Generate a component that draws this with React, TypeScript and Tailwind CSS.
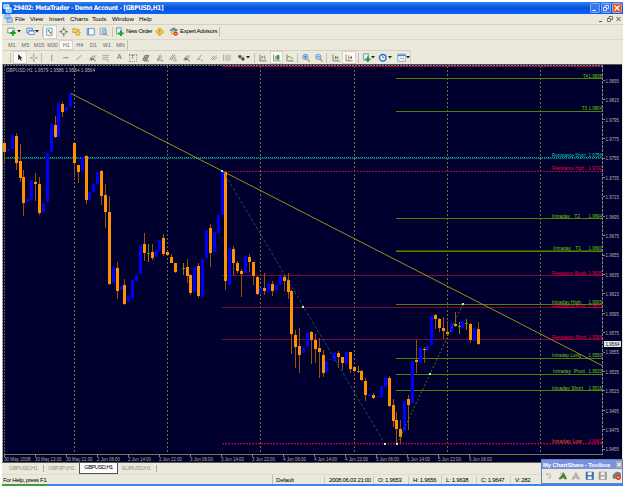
import React from 'react';
import clsx from 'clsx';

type Kind = 'up' | 'down' | 'doji';
// kind, body top, body bottom, wick top, wick bottom
type Candle = [Kind, number, number, number?, number?];

const U: Kind = 'up';
const D: Kind = 'down';
const N: Kind = 'doji';

const CANDLES: Candle[] = [
  [D, 143, 152, 143, 164], [U, 149, 151], [U, 135, 149], [D, 136, 163, 133, 170], [D, 161, 178, 144, 182],
  [D, 177, 203, 170, 216], [U, 199, 202], [U, 180, 200], [D, 182, 184, 173, 201], [D, 184, 213, 177, 215],
  [U, 203, 212], [U, 153, 202], [U, 124, 152], [D, 125, 137, 116, 138], [U, 103, 137],
  [D, 104, 112, 102, 117], [U, 107, 111], [U, 93, 107], [D, 143, 163, 142, 177], [D, 165, 172, 165, 183],
  [U, 157, 171], [D, 156, 200, 155, 204], [U, 192, 200], [U, 184, 192], [U, 172, 184],
  [D, 171, 196, 170, 205], [D, 195, 212, 184, 228], [D, 212, 284, 196, 285], [U, 267, 283], [D, 268, 291, 262, 299],
  [U, 286, 290], [D, 285, 304, 279, 305], [U, 296, 302], [U, 280, 298], [U, 275, 281],
  [U, 245, 274], [D, 244, 253, 233, 261], [N, 253, 254, 244, 262], [D, 252, 258, 244, 260], [U, 250, 257],
  [U, 240, 251], [D, 238, 254, 234, 256], [D, 252, 255, 251, 256], [D, 257, 263, 254, 263], [D, 263, 272, 263, 273],
  [U, 270, 271], [N, 268, 269, 263, 275], [D, 267, 276, 259, 283], [D, 275, 293, 274, 295], [U, 267, 292],
  [D, 266, 296, 263, 298], [U, 259, 297], [U, 230, 258], [D, 228, 253, 224, 267], [U, 232, 252],
  [U, 215, 233], [U, 171, 215], [D, 172, 281, 171, 290], [U, 248, 285], [D, 249, 263, 246, 275],
  [D, 263, 271, 261, 273], [D, 271, 274, 269, 297], [U, 256, 273], [D, 257, 262, 254, 272], [D, 262, 276, 262, 285],
  [D, 277, 294, 276, 295], [U, 288, 293], [D, 288, 291, 273, 295], [U, 283, 292], [D, 284, 291, 281, 296],
  [U, 285, 290], [U, 276, 285], [D, 277, 281, 274, 291], [D, 280, 292, 273, 299], [D, 291, 334, 290, 354],
  [D, 335, 347, 330, 368], [D, 346, 355, 328, 373], [U, 348, 353], [U, 333, 347], [D, 332, 340, 331, 364],
  [D, 340, 349, 334, 363], [D, 348, 352, 338, 378], [D, 355, 373, 350, 377], [U, 361, 372], [U, 359, 360],
  [U, 352, 361], [D, 353, 357, 351, 368], [D, 357, 363, 357, 370], [U, 352, 364], [D, 352, 369, 352, 373],
  [D, 367, 371, 366, 372], [N, 371, 372, 366, 373], [D, 371, 380, 370, 381], [D, 381, 395, 378, 401], [U, 394, 396],
  [D, 395, 398, 393, 399], [U, 396, 397], [U, 386, 397], [U, 377, 387], [D, 378, 406, 376, 407],
  [D, 405, 421, 399, 427], [D, 420, 429, 412, 445], [D, 429, 437, 420, 444], [U, 401, 431], [D, 399, 405, 395, 430],
  [U, 361, 403], [D, 360, 362, 340, 373], [U, 348, 363], [D, 349, 350, 347, 363], [U, 346, 350],
  [U, 316, 345], [D, 315, 319, 314, 329], [D, 319, 328, 318, 332], [D, 328, 331, 317, 339], [D, 332, 334, 321, 335],
  [U, 323, 332], [D, 324, 326, 312, 327], [N, 326, 327, 322, 334], [U, 321, 328], [N, 323, 324, 319, 330],
  [D, 324, 340, 323, 343], [U, 328, 341], [D, 329, 344, 322, 345],
];

const TIMES: [number, string][] = [
  [4, '30 May 2008'], [35, '30 May 13:00'], [66, '30 May 21:00'], [97, '2 Jun 06:00'],
  [128, '2 Jun 14:00'], [159, '2 Jun 22:00'], [190, '3 Jun 06:00'], [221, '3 Jun 14:00'],
  [252, '3 Jun 22:00'], [283, '4 Jun 06:00'], [314, '4 Jun 14:00'], [345, '4 Jun 22:00'],
  [376, '5 Jun 06:00'], [407, '5 Jun 14:00'], [438, '5 Jun 22:00'], [469, '6 Jun 06:00'],
];

const GREEN = '#74c800';
const RED = '#f00046';

// label x, baseline y, width, name, price, colour
const LEVELS: [number, number, number, string, string, string][] = [
  [583, 77.7, 5, 'T4', '1.9838', GREEN],
  [582, 110, 5, 'T3', '1.9804', GREEN],
  [552, 157, 34, 'Resistance Short', '1.9756', '#00d0b8'],
  [552, 170.3, 32, 'Resistance High', '1.9742', RED],
  [552, 217.7, 28, 'Intraday   T2', '1.9694', GREEN],
  [553, 250, 28, 'Intraday   T1', '1.9660', GREEN],
  [552, 274.7, 34, 'Resistance Break', '1.9635', RED],
  [552, 308, 33, 'Resistance Pivot', '1.9602', RED],
  [552, 303.5, 29, 'Intraday High', '1.9605', GREEN],
  [552, 338.7, 34, 'Resistance Short', '1.9568', RED],
  [552, 357.2, 29, 'Intraday Long', '1.9550', GREEN],
  [553, 373.2, 32, 'Intraday  Pivot', '1.9533', GREEN],
  [552, 389.7, 31, 'Intraday Short', '1.9516', GREEN],
];

function Chart() {
  return (
    <svg
      width="620"
      height="399"
      viewBox="2 64 620 399"
      className="block shrink-0 bg-[#00002e]"
      fontFamily="'Liberation Sans', sans-serif"
      fontSize="5.5"
    >
      <g shapeRendering="crispEdges">
        <path d="M2 64.5H622" stroke="#55554c" />
        <path d="M2.5 64V463" stroke="#a8a498" />
        <path d="M4 65.5H602" stroke="#77777a" strokeDasharray="2 1" />
        <path d="M4.5 66V454" stroke="#606058" strokeDasharray="2 1" />
        {[74.5, 167.5, 260.5, 354.5, 447.5, 540.5].map((x) => (
          <path key={x} d={`M${x} 66V454`} stroke="#70702f" strokeDasharray="2 2" />
        ))}
        <path d="M4 157.5H602" stroke="#00a890" strokeDasharray="1 1" />
        <path d="M4 158.5H602" stroke="#007068" strokeDasharray="2 1" />
        <path d="M222 66.5H602" stroke="#a80838" />
        <path d="M222 171.5H602" stroke="#b0003c" strokeDasharray="2 1" />
        {[275.5, 307.5, 339.5].map((y) => (
          <path key={y} d={`M222 ${y}H602`} stroke="#900038" />
        ))}
        <path d="M222 443.5H602" stroke="#b80038" strokeDasharray="2 1" />
        <path d="M223 444.5H602" stroke="#780038" strokeDasharray="1 2" />
        {[78.5, 111.5, 218.5, 251.5, 304.5, 358.5, 374.5, 390.5].map((y) => (
          <path key={y} d={`M396 ${y}H602`} stroke="#4a8400" />
        ))}
        <path d="M396 250.5H602" stroke="#2c5400" />
      </g>

      <g shapeRendering="crispEdges">
        {CANDLES.map(([kind, top, bottom, high, low], i) => {
          const x = Math.floor(4.5 + i * 3.885);
          const fill = kind === 'up' ? '#0000ff' : kind === 'down' ? '#ff9000' : '#858500';
          return (
            <g key={i}>
              {high !== undefined && low !== undefined && (
                <rect x={x} y={high} width="1" height={low - high} fill={kind === 'doji' ? '#858500' : '#985600'} />
              )}
              <rect x={x - 1} y={top} width="3" height={Math.max(1, bottom - top)} fill={fill} />
            </g>
          );
        })}
      </g>

      <path d="M71 93.5L602 365.5" stroke="#aaa000" strokeWidth="0.9" />
      <path d="M223 171L385 444" stroke="#107070" strokeWidth="0.8" strokeDasharray="3 2" />
      <path d="M397 444L463 304" stroke="#4d9800" strokeWidth="0.8" strokeDasharray="2 2" />
      {[[222, 171], [303, 307], [385, 444], [397, 444], [430, 374], [463, 304]].map(([x, y]) => (
        <rect key={x} x={x - 1} y={y - 1} width="2" height="2" fill="#b9ff8c" />
      ))}

      <text x="6" y="71.5" textLength="89" lengthAdjust="spacingAndGlyphs" fill="#b8b898">
        GBPUSD,H1  1.9579 1.9586 1.9564 1.9564
      </text>
      {LEVELS.map(([x, y, width, name, price, color]) => (
        <g key={`${name}${y}`} fill={color}>
          <text x={x} y={y} className="whitespace-pre" textLength={width} lengthAdjust="spacingAndGlyphs">{name}</text>
          <text x="588.5" y={y} textLength="13.5" lengthAdjust="spacingAndGlyphs">{price}</text>
        </g>
      ))}
      <text x="552" y="443" fill="#e05a10" textLength="30" lengthAdjust="spacingAndGlyphs">Intraday Low</text>
      <text x="588.5" y="443" fill={RED} textLength="13.5" lengthAdjust="spacingAndGlyphs">1.9461</text>

      <g shapeRendering="crispEdges" stroke="#858575">
        <path d="M602.5 65V455" strokeDasharray="3 1" />
        <path d="M4 454.5H603" stroke="#77783b" />
        {Array.from({ length: 20 }, (_, i) => (
          <path key={i} d={`M603 ${Math.round(80 + i * 19.4) + 0.5}H605`} />
        ))}
        {TIMES.map(([x]) => (
          <path key={x} d={`M${x + 0.5} 454V457`} />
        ))}
        <path d="M2 462.5H622" stroke="#5c5b55" />
      </g>
      {Array.from({ length: 20 }, (_, i) => (
        <text key={i} x="605.5" y={82.7 + i * 19.4} textLength="13.5" lengthAdjust="spacingAndGlyphs" fill="#b4b3aa">
          {(1.9835 - i * 0.002).toFixed(4)}
        </text>
      ))}
      <rect x="604" y="341" width="17" height="6" fill="#e6e6e0" />
      <text x="605.5" y="346" textLength="14" lengthAdjust="spacingAndGlyphs" fill="#111">1.9564</text>
      {TIMES.map(([x, label]) => (
        <text key={label} x={x} y="460.7" textLength={label.includes('May') ? 26.5 : 23} lengthAdjust="spacingAndGlyphs" fill="#b4b398">
          {label}
        </text>
      ))}
    </svg>
  );
}

const GLYPHS: Record<string, React.ReactNode> = {
  cursor: <path d="M4 1.5V9L6 7l1.5 3 1-.5L7 6.7h2.5z" fill="#222" />,
  cross: <path d="M6 1v4M6 7v4M1 6h4M7 6h4" stroke="#777" />,
  target: <><circle cx="6" cy="6" r="3" fill="none" stroke="#777" /><path d="M6 0v4M6 8v4M0 6h4M8 6h4" stroke="#555" /></>,
  vline: <path d="M6 2v8" stroke="#777" />,
  hline: <path d="M2.5 6h7" stroke="#777" />,
  trend: <path d="M3 9l6-6" stroke="#777" />,
  channel: <path d="M2 9l5-6M4 10l6-7M3 6l6 3M3 8h4M8 10h2" stroke="#666" fill="none" />,
  fibo: <path d="M2 3h8M2 5.5h8M2 8h6M9 8v3" stroke="#777" strokeDasharray="1.5 .6" />,
  fork: <path d="M2 9l3-6h5L7 9zM4 6h5M4 10h6" stroke="#666" fill="#aaa" />,
  fan: <path d="M3 9l4-7M3 9l6-5M3 9h5M9 8v3" stroke="#777" fill="none" />,
  lines: <path d="M1.5 9l5-7M4 9l5-7M6.5 10l3-5M10 8v3" stroke="#777" fill="none" />,
  angle: <path d="M3 8l6-6M3 8h4M9 8v3" stroke="#888" fill="none" />,
  slashes: <path d="M2 8l4-4M4 9l5-6M7 9l3-4" stroke="#888" />,
  zones: <path d="M2 2v8M5 2v8M7.5 2v8M10 2v8" stroke="#999" />,
  arrows: <path d="M2 3h3v3H2zM6 6h3v3H6zM4 8l4-5" fill="#444" stroke="#333" strokeWidth=".5" />,
  bars: <><path d="M2.5 2v8H11" stroke="#666" fill="none" /><path d="M5 4v4M5 5h2M8.5 3v5" stroke="#489048" /></>,
  candles: <><path d="M2 2v8h9M4.5 4v4" stroke="#666" fill="none" /><path d="M6 3h3v5H6z" fill="#20a838" stroke="#167022" strokeWidth=".5" /></>,
  curve: <><path d="M2.5 2v8H11" stroke="#666" fill="none" /><path d="M3 6c3-4 4 1 7 1" stroke="#35933b" fill="none" /></>,
  zoomin: <><path d="M8 8l3 3" stroke="#c9a52c" strokeWidth="1.8" /><circle cx="5.5" cy="5" r="3.4" fill="#c4e1ff" stroke="#5584c4" /><path d="M3.5 5h4M5.5 3v4" stroke="#2560b4" /></>,
  zoomout: <><path d="M8 8l3 3" stroke="#c9a52c" strokeWidth="1.8" /><circle cx="5.5" cy="5" r="3.4" fill="#c4e1ff" stroke="#5584c4" /><path d="M3.5 5h4" stroke="#2560b4" /></>,
  scroll: <><path d="M2.5 2v8H11M8.5 4v4" stroke="#666" fill="none" /><path d="M5 3.5L8 6 5 8z" fill="#2e9b38" /></>,
  shift: <><path d="M2.5 2v8H11M6 3v6" stroke="#666" fill="none" /><path d="M10 3.5L7 6l3 2z" fill="#b95525" /></>,
  newchart: <><path d="M1 1.5h8v6H1z" fill="#fff" stroke="#63845d" /><path d="M7.5 4v7M4 7.5h7" stroke="#14a51e" strokeWidth="2.5" /></>,
  profiles: <><path d="M1 1.5h7v6H1z" fill="#cfe1f8" stroke="#507cb4" /><path d="M3.5 4.5h7v5h-7z" fill="#f1f7ff" stroke="#507cb4" /><path d="M4 5h6" stroke="#4d83d1" strokeWidth="1.3" /></>,
  market: <><path d="M2 1.5h7v9H2z" fill="#fff" stroke="#5386c4" /><path d="M3.5 3.5H6v2.2H3.5z" fill="#24a84a" /><path d="M5.5 6H8v2.2H5.5z" fill="#d65330" /></>,
  folder: <><path d="M1 2h4l1 1h3v4H1z" fill="#f5cf54" stroke="#ab8426" strokeWidth=".7" /><path d="M7 4.5l1.3 2 2.7.3-2 1.7.5 2.5L7 9.8 5 11l.5-2.5-1.8-1.7 2.5-.3z" fill="#ffd943" stroke="#af8525" strokeWidth=".6" /></>,
  terminal: <><path d="M1.5 2h9v8h-9z" fill="#fff" stroke="#477dbb" /><path d="M3 2v8" stroke="#5d9be4" strokeWidth="2" /></>,
  tester: <><path d="M1.5 1.5h7v8h-7z" fill="#e4edfb" stroke="#6b96cc" /><circle cx="6.5" cy="6" r="2.5" fill="#bdd5f3" stroke="#547caf" /><path d="M8 8l3 3" stroke="#c69c29" strokeWidth="1.4" /></>,
  order: <><path d="M2 1h6v8H2z" fill="#e5effc" stroke="#6780a4" /><path d="M7.5 4.5v7M4 8h7" stroke="#17a524" strokeWidth="2.4" /></>,
  diamond: <><path d="M6 1l5 5-5 5-5-5z" fill="#ffcf36" stroke="#c38a12" /><path d="M6 3.5v3.5M6 8v1" stroke="#835e0b" /></>,
  advisor: <><path d="M1 4l5-3 5 3-5 2z" fill="#4d91db" stroke="#2e66a1" strokeWidth=".6" /><circle cx="5" cy="7" r="3" fill="#f0bb4e" /><circle cx="8.5" cy="8.5" r="2.7" fill="#d83a21" /><path d="M7.3 8.5h2.4" stroke="#fff" /></>,
  clock: <><circle cx="6" cy="6" r="4.2" fill="#e9f5ff" stroke="#2e70cf" strokeWidth="1.8" /><path d="M6 3.5V6h2" stroke="#355d97" fill="none" /></>,
  template: <><path d="M1 1.5h10v9H1z" fill="#f6faff" stroke="#6f98c9" /><path d="M1 3h10" stroke="#5189d1" strokeWidth="2" /><path d="M3 8l2-2 2 2 2-2" stroke="#b36c50" fill="none" /></>,
  undo: <path d="M3 4h5v5H5M5 2L3 4l2 2" stroke="#aaa" fill="none" />,
  share: <><path d="M1 10l4-5 2-3 4 8H8L6.500 7.500 4 10z" fill="#269435" stroke="#5c6a2c" strokeWidth=".7" /><path d="M3 4l2-2" stroke="#c5482c" /></>,
  sharegray: <path d="M1 10l3-4 2-4 2 3 3 5H8L6 7l-2 3z" fill="#bbb" stroke="#999" strokeWidth=".8" />,
  disk: <><path d="M1.5 1.5h9v9h-9z" fill="#3a7ac4" stroke="#27599a" /><path d="M3.5 1.5h5V5h-5zM3.5 7h5v3.5h-5z" fill="#eff6ff" /></>,
  diskgray: <><path d="M1.5 1.5h9v9h-9z" fill="#aaa" stroke="#888" /><path d="M3.5 1.5h5V5h-5zM3.5 7h5v3.5h-5z" fill="#eee" /></>,
  stop: <><path d="M1.500 5l4-3.500 5 1V9h-9z" fill="#6683a8" stroke="#755c45" /><circle cx="8" cy="8" r="3.300" fill="#dc4020" /><path d="M6.500 8h3" stroke="#fff" /></>,
};

function Glyph({ name, className }: { name: string; className?: string }) {
  return (
    <span className={clsx('flex h-full w-[13.5px] shrink-0 items-center justify-center', className)}>
      <svg width="9.5" height="9.5" viewBox="0 0 12 12" className="shrink-0">{GLYPHS[name]}</svg>
    </span>
  );
}

function Letter({ children }: { children: string }) {
  return <span className="w-[13.5px] shrink-0 text-center text-[7px] text-[#666]">{children}</span>;
}

const Sep = ({ className }: { className?: string }) => (
  <span className={clsx('h-[10px] w-px shrink-0 bg-[#c8bfae]', className)} />
);

const Arrow = () => (
  <svg width="4" height="3" viewBox="0 0 4 3" className="-ml-[2px] shrink-0"><path d="M0 0h4L2 2.5z" fill="#222" /></svg>
);

const PRESSED = 'border border-[#d8d2c4] bg-[#faf9f5]';

const MENU: [string, string][] = [
  ['File', 'w-[15px]'], ['View', 'w-[19px]'], ['Insert', 'w-[21px]'], ['Charts', 'w-[22px]'],
  ['Tools', 'w-[20px]'], ['Window', 'w-[27px]'], ['Help', 'w-[20px]'],
];

const STATUS: [string, string][] = [
  ['2008.06.03 21:00', 'w-[49px]'], ['O: 1.9653', 'w-[35px]'], ['H: 1.9656', 'w-[33px]'],
  ['L: 1.9638', 'w-[35px]'], ['C: 1.9647', 'w-[34px]'], ['V: 282', 'w-[28px]'],
];

function Toolbox() {
  return (
    <div className="absolute left-[541px] top-[459px] flex h-[25px] w-[82px] flex-col border border-[#667fc8] bg-[#edeadd]">
      <div className="flex h-[9px] items-center justify-between bg-[#7893dc] pl-px text-[6px] font-bold leading-none text-white">
        <span className="whitespace-nowrap tracking-[-0.15px]">My ChartShare - Toolbox</span>
        <span className="flex h-[7px] w-[6px] items-center justify-center bg-[#b1aaa4] text-[7px]">×</span>
      </div>
      <div className="flex flex-1 items-center">
        {['undo', 'share', 'sharegray', 'disk', 'diskgray', 'stop'].map((n) => (
          <Glyph key={n} name={n} />
        ))}
      </div>
    </div>
  );
}

export default function App() {
  return (
    <div className="relative h-[486px] w-[625px] overflow-hidden bg-white pl-[2px] pt-[2px] font-['Liberation_Sans',sans-serif] text-black">
      <div className="flex w-[621px] flex-col bg-[#ebe9dc]">
        {/* title bar */}
        <div className="flex h-[12px] items-center bg-gradient-to-b from-[#2f80ee] via-[#0950db] to-[#0764fb] pr-[1px] text-white">
          <svg width="9" height="9" viewBox="0 0 12 12" className="ml-[1px]">
            <path d="M1 1h7v5H1zM4 5h7v6H4z" fill="#8dcaf9" stroke="#fff" />
          </svg>
          <span className="ml-[1px] whitespace-pre font-['DejaVu_Sans_Condensed','DejaVu_Sans',sans-serif] text-[6.5px] font-bold leading-none tracking-[-0.36px]">
            29402: MetaTrader - Demo Account - [GBPUSD,H1]
          </span>
          <span className="flex-1" />
          <svg width="32" height="10" viewBox="0 0 32 10">
            <rect x=".5" y=".5" width="9" height="9" rx="1" fill="#3c78ea" stroke="#a8c6fa" strokeWidth=".7" />
            <path d="M2.5 7.5h3" stroke="#fff" />
            <rect x="11.5" y=".5" width="9" height="9" rx="1" fill="#3c78ea" stroke="#a8c6fa" strokeWidth=".7" />
            <path d="M13.5 4.5h3v3h-3zM15 4V2.5h3.5v3H17" fill="none" stroke="#fff" strokeWidth=".8" />
            <rect x="22.5" y=".5" width="9" height="9" rx="1" fill="#dc5732" stroke="#f2bba7" strokeWidth=".7" />
            <path d="M24.5 2.5l5 5m0-5l-5 5" stroke="#fff" strokeWidth="1.2" />
          </svg>
        </div>

        {/* menu */}
        <div className="flex h-[10.5px] items-center border-b border-[#d5d0c0] text-[6.2px] leading-none">
          <svg width="9" height="9" viewBox="0 0 12 12" className="ml-[2px] mr-[2px]">
            <path d="M1 1h7v5H1zM4 5h7v6H4z" fill="#a9d2f5" stroke="#5a8fd0" />
          </svg>
          {MENU.map(([label, width]) => (
            <span key={label} className={width}>{label}</span>
          ))}
          <span className="flex-1" />
          <svg width="26" height="8" viewBox="0 0 26 8" className="mr-[1px]" fill="none" stroke="#555">
            <path d="M3 6.5h3" />
            <path d="M11.5 3.5h3v3h-3zM13 3V1.5h3.5v3H15" strokeWidth=".8" />
            <path d="M20.5 2l4 4m0-4l-4 4" />
          </svg>
        </div>

        {/* standard toolbar */}
        <div className="flex h-[14.5px] items-center">
          <Glyph name="newchart" className="ml-[3px]" />
          <Arrow />
          <Glyph name="profiles" className="ml-[3px]" />
          <Arrow />
          <Sep className="ml-[3px]" />
          <Glyph name="market" className={PRESSED} />
          <Glyph name="target" />
          <Glyph name="folder" />
          <Glyph name="terminal" />
          <Glyph name="tester" />
          <Sep className="ml-[1px]" />
          <Glyph name="order" />
          <span className="w-[27px] whitespace-nowrap text-[6px] tracking-[-0.32px]">New Order</span>
          <Glyph name="diamond" />
          <Glyph name="advisor" />
          <span className="w-[39px] whitespace-nowrap text-[6px] tracking-[-0.3px]">Expert Advisors</span>
          <Sep />
        </div>

        {/* periods */}
        <div className="flex h-[11px] items-center border-t border-[#dcd7ca] pl-[3px] text-[5.5px] text-[#666]">
          {['M1', 'M5', 'M15', 'M30', 'H1', 'H4', 'D1', 'W1', 'MN'].map((p) => (
            <span key={p} className={clsx('flex h-full w-[13.6px] items-center justify-center', p === 'H1' && PRESSED)}>
              {p}
            </span>
          ))}
          <Sep />
        </div>

        {/* line studies and chart toolbar */}
        <div className="flex h-[14px] items-center">
          <div className="flex h-full w-[409px] items-center border-r border-t border-[#d8cfc3]">
            <Sep className="ml-[8px] mr-[2px]" />
            <Glyph name="cursor" className={PRESSED} />
            <Glyph name="cross" />
            <Sep className="ml-[1px] mr-[3px]" />
            {['vline', 'hline', 'trend', 'channel', 'fibo'].map((n) => <Glyph key={n} name={n} />)}
            <Letter>A</Letter>
            <span className="flex w-[13.5px] justify-center">
              <span className="flex h-[8px] w-[8px] items-center justify-center border border-dotted border-[#999] text-[6px] text-[#666]">T</span>
            </span>
            {['fork', 'fan', 'lines', 'channel', 'angle', 'slashes', 'zones'].map((n) => <Glyph key={n} name={n} />)}
            <Glyph name="arrows" className="ml-[1px]" />
            <Arrow />
            <Sep className="ml-[4px] mr-[1px]" />
            <Glyph name="bars" />
            <Glyph name="candles" className={PRESSED} />
            <Glyph name="curve" />
            <Sep className="mr-[1px]" />
            <Glyph name="zoomin" />
            <Glyph name="zoomout" />
            <Sep className="mr-[2px]" />
            <Glyph name="scroll" />
            <Glyph name="shift" className={PRESSED} />
            <Sep className="ml-[2px] mr-[1px]" />
            <Glyph name="order" />
            <Arrow />
            <Glyph name="clock" className="ml-[1px]" />
            <Arrow />
            <Glyph name="template" className="ml-[3px]" />
            <Arrow />
          </div>
        </div>

        <Chart />

        {/* chart tabs */}
        <div className="flex h-[11px] text-[5.7px] leading-none tracking-[-0.5px] text-[#99968a]">
          <span className="flex w-[41px] items-center pl-[7px]">GBPUSD,H1</span>
          <span className="my-[2px] flex w-[36px] items-center border-l border-[#aaa] pl-[4px]">GBPJPY,H1</span>
          <span className="flex h-[10.5px] w-[39px] items-center justify-center border border-t-0 border-[#555] bg-white text-black">GBPUSD,H1</span>
          <span className="my-[2px] flex w-[39px] items-center border-r border-[#aaa] pl-[4px]">EURUSD,H1</span>
        </div>

        {/* status bar */}
        <div className="flex h-[10px] items-center border-t border-[#dedbd0] text-[6px] leading-none">
          <span className="w-[270px] pl-px tracking-[-0.35px]">For Help, press F1</span>
          <Sep className="h-[8px]" />
          <span className="w-[51px] pl-[3px] tracking-[-0.2px]">Default</span>
          {STATUS.map(([label, width]) => (
            <span key={label} className={clsx('flex h-[8px] items-center whitespace-nowrap border-l border-[#d0cabb] pl-[4px] tracking-[-0.3px]', width)}>
              {label}
            </span>
          ))}
        </div>
        <div className="flex h-[2px] bg-[#3c88e8]">
          <span className="w-[45px] bg-[#3f9b46]" />
        </div>
      </div>
      <Toolbox />
    </div>
  );
}
